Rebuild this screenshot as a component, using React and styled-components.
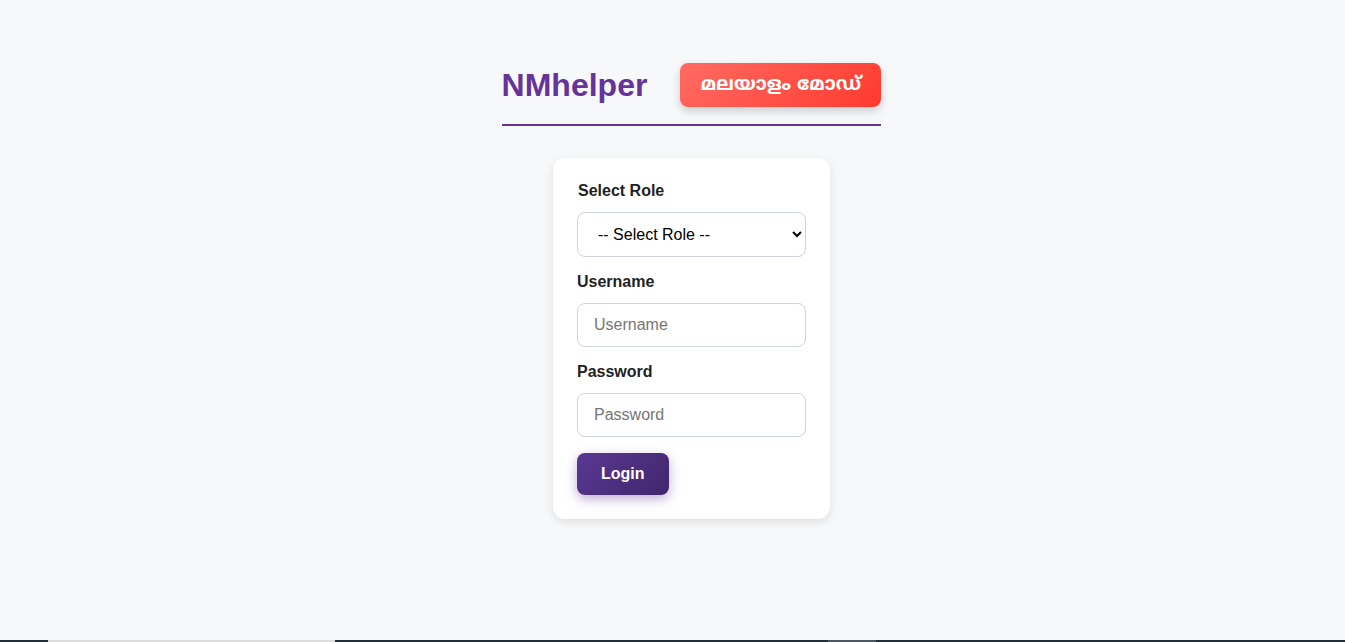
import React from "react";
import styled, { createGlobalStyle } from "styled-components";

const colors = {
  bg: "#f7f8fa",
  purple: "#663399",
  text: "#1f1f24",
  border: "#cfd3da",
  white: "#ffffff"
};

const GlobalStyle = createGlobalStyle`
  html, body {
    margin: 0;
    padding: 0;
    background: ${colors.bg};
    font-family: "Liberation Sans", Arial, sans-serif;
  }
  * {
    box-sizing: border-box;
  }
`;

const Page = styled.div`
  min-height: 100vh;
  display: flex;
  flex-direction: column;
`;

const Main = styled.main`
  flex: 1;
  display: flex;
  flex-direction: column;
  align-items: center;
  padding: 63px 0 0 38px;
`;

const Header = styled.header`
  display: flex;
  align-items: center;
  gap: 33px;
  padding-bottom: 17px;
  border-bottom: 2px solid ${colors.purple};
`;

const Brand = styled.h1`
  margin: 0;
  font-size: 32px;
  font-weight: 700;
  color: ${colors.purple};
`;

const ModeButton = styled.button`
  height: 44px;
  width: 201px;
  border: none;
  border-radius: 8px;
  background: linear-gradient(135deg, #ff6b63 0%, #ff3a2f 100%);
  box-shadow: 0 4px 10px rgba(0, 0, 0, 0.18);
  color: ${colors.white};
  font-family: "Noto Sans Malayalam", "Noto Sans", sans-serif;
  font-size: 19px;
  font-weight: 700;
  cursor: pointer;
`;

const Card = styled.form`
  margin-top: 32px;
  width: 277px;
  background: ${colors.white};
  border-radius: 12px;
  box-shadow: 0 3px 10px rgba(0, 0, 0, 0.1);
  padding: 24px;
  display: flex;
  flex-direction: column;
`;

const Label = styled.label`
  margin: 16px 0 12px;
  font-size: 16px;
  line-height: 18px;
  font-weight: 700;
  color: ${colors.text};
  padding-left: ${p => (p.$nudge ? "1px" : "0")};
  &:first-child {
    margin-top: 0;
  }
`;

const Field = styled.input`
  height: 44px;
  width: 100%;
  padding: 0 16px;
  border: 1px solid ${colors.border};
  border-radius: 8px;
  font-family: "Liberation Sans", Arial, sans-serif;
  font-size: 16px;
  color: ${colors.text};
  background: ${colors.white};
  &::placeholder {
    color: #767676;
  }
`;

const Select = styled.select`
  height: 45px;
  width: 100%;
  padding: 0 6px 0 16px;
  border: 1px solid ${colors.border};
  border-radius: 8px;
  font-family: "Liberation Sans", Arial, sans-serif;
  font-size: 16px;
  color: #000;
  background: ${colors.white};
`;

const Submit = styled.button`
  align-self: flex-start;
  margin-top: 16px;
  height: 42px;
  padding: 0 24px;
  border: none;
  border-radius: 8px;
  background: linear-gradient(135deg, #5a3892 0%, #40266c 100%);
  box-shadow: 0 4px 12px rgba(102, 51, 153, 0.4);
  color: ${colors.white};
  font-family: "Liberation Sans", Arial, sans-serif;
  font-size: 16px;
  font-weight: 700;
  cursor: pointer;
`;

const Taskbar = styled.div`
  height: 2px;
  display: flex;
  background: #1f303b;
`;

const TaskItem = styled.span`
  margin-left: ${p => p.$left}px;
  width: ${p => p.$width}px;
  background: ${p => p.$color};
`;

const App = () => (
  <Page>
    <GlobalStyle />
    <Main>
      <Header>
        <Brand>NMhelper</Brand>
        <ModeButton type="button">മലയാളം മോഡ്</ModeButton>
      </Header>
      <Card onSubmit={e => e.preventDefault()}>
        <Label $nudge>Select Role</Label>
        <Select defaultValue="">
          <option value="">-- Select Role --</option>
          <option value="admin">Admin</option>
          <option value="helper">Helper</option>
        </Select>
        <Label>Username</Label>
        <Field type="text" placeholder="Username" />
        <Label>Password</Label>
        <Field type="password" placeholder="Password" />
        <Submit type="submit">Login</Submit>
      </Card>
    </Main>
    <Taskbar>
      <TaskItem $left={48} $width={287} $color="#dcdcdc" />
      <TaskItem $left={493} $width={48} $color="#4a5661" />
    </Taskbar>
  </Page>
);

export default App;
